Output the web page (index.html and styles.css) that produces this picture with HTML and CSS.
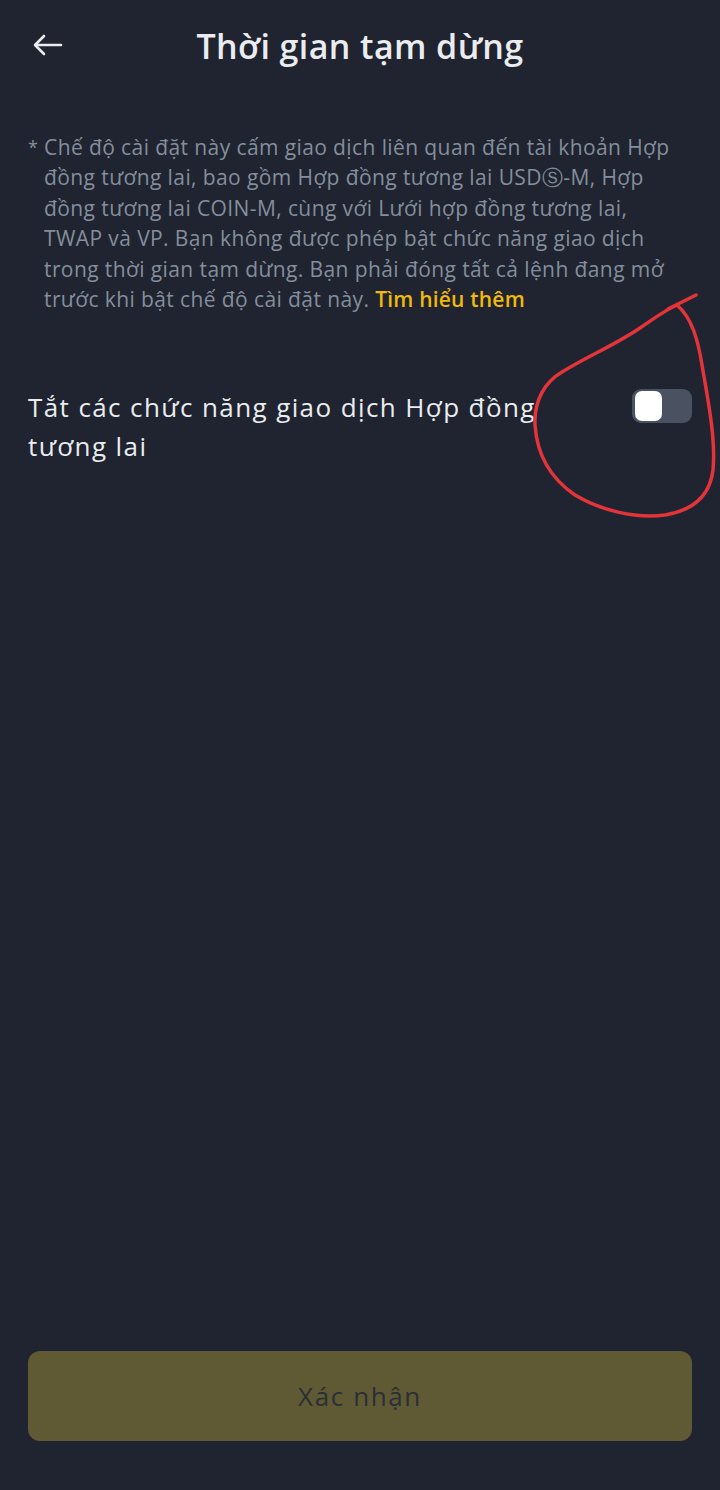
FILE: index.html
```html
<!DOCTYPE html>
<html lang="vi">
<head>
  <meta charset="UTF-8" />
  <meta name="viewport" content="width=device-width, initial-scale=1" />
  <title>Thời gian tạm dừng</title>
  <link rel="stylesheet" href="styles.css">
</head>
<body>
  <div class="page">
    <header class="topbar">
      <button class="btn-back" aria-label="Quay lại">
        <svg width="30" height="22" viewBox="0 0 30 22" fill="none" stroke="#eaecef" stroke-width="2.6" stroke-linecap="round" stroke-linejoin="round">
          <path d="M28 11H3"/>
          <path d="M11 2L2 11L11 20"/>
        </svg>
      </button>
      <h1>Thời gian tạm dừng</h1>
      <span></span>
    </header>

    <!-- ghi chú -->
    <div class="ghichu">
      <span class="sao">*</span>
      <p>Chế độ cài đặt này cấm giao dịch liên quan đến tài khoản Hợp đồng tương lai, bao gồm Hợp đồng tương lai USDⓈ-M, Hợp đồng tương lai COIN-M, cùng với Lưới hợp đồng tương lai, TWAP và VP. Bạn không được phép bật chức năng giao dịch trong thời gian tạm dừng. Bạn phải đóng tất cả lệnh đang mở trước khi bật chế độ cài đặt này. <a href="#" class="link">Tìm hiểu thêm</a></p>
    </div>

    <div class="tuy-chon">
      <span class="nhan">Tắt các chức năng giao dịch Hợp đồng tương lai</span>
      <label class="switch">
        <input type="checkbox">
        <span class="knob"></span>
      </label>
    </div>

    <button class="btn-xacnhan" disabled>Xác nhận</button>
  </div>

  <!-- vòng khoanh đỏ -->
  <svg class="khoanh" viewBox="0 0 720 1490" fill="none" stroke="#e3343a" stroke-width="3.5" stroke-linecap="round" stroke-linejoin="round">
    <path d="M696 295L668 309"/>
    <path d="M677 305C692 318 698 340 702 365C708 400 716 440 713 470C710 495 695 510 665 515C635 519 600 510 575 495C550 478 537 455 535 425C534 400 545 382 562 372C590 355 615 345 640 328C655 318 665 310 677 305"/>
  </svg>
</body>
</html>
```

FILE: styles.css
```css
body {
  margin: 0;
  background: #1f2430;
  font-family: "Open Sans", "Noto Sans", sans-serif;
  color: #eaecef;
  position: relative;
}

.page {
  min-height: 1490px;
  display: flex;
  flex-direction: column;
}

.topbar {
  height: 92px;
  display: grid;
  grid-template-columns: 100px 1fr 100px;
  align-items: center;
}

.btn-back {
  background: none;
  border: none;
  padding: 0;
  margin-left: 32px;
  width: 32px;
  height: 24px;
  cursor: pointer;
  justify-self: start;
}

.topbar h1 {
  margin: 0;
  text-align: center;
  font-size: 34px;
  font-weight: 600;
  letter-spacing: 0.4px;
  color: #eaecef;
}

.ghichu {
  display: flex;
  padding: 0 38px 0 28px;
  margin-top: 40px;
  color: #848e9c;
  font-size: 21px;
  letter-spacing: 0.4px;
  line-height: 30.4px;
}

.sao {
  width: 16px;
  flex-shrink: 0;
  font-size: 18px;
  letter-spacing: 0;
}

.ghichu p {
  margin: 0;
}

.link {
  color: #f0b90b;
  text-decoration: none;
  font-weight: 600;
  letter-spacing: 0.2px;
}

.tuy-chon {
  display: flex;
  justify-content: space-between;
  align-items: flex-start;
  padding: 0 28px;
  margin-top: 74px;
}

.nhan {
  max-width: 560px;
  font-size: 26px;
  letter-spacing: 1.4px;
  line-height: 39px;
  color: #eaecef;
}

.switch {
  position: relative;
  width: 60px;
  height: 34px;
  margin-top: 1px;
  border-radius: 9px;
  background: #4a5262;
  cursor: pointer;
}

.switch input {
  display: none;
}

.knob {
  position: absolute;
  top: 2px;
  left: 3px;
  width: 27px;
  height: 30px;
  border-radius: 7px;
  background: #ffffff;
}

.btn-xacnhan {
  margin: auto 28px 49px;
  height: 90px;
  border: none;
  border-radius: 12px;
  background: #5f5a33;
  color: #2b2f36;
  font-family: "Open Sans", "Noto Sans", sans-serif;
  font-size: 26px;
  letter-spacing: 1.6px;
}

.khoanh {
  position: absolute;
  top: 0;
  left: 0;
  width: 720px;
  height: 1490px;
  pointer-events: none;
}
```
